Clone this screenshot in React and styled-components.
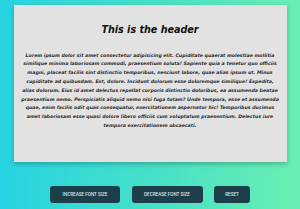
import React from "react";
import styled, { createGlobalStyle } from "styled-components";

const Global = createGlobalStyle`
  html, body { margin: 0; padding: 0; }
  body {
    width: 300px;
    height: 209px;
    overflow: hidden;
    background: linear-gradient(to right, #27d3e2 0%, #45e0c8 50%, #6aefb2 100%);
  }
`;

const Page = styled.div`
  width: 300px;
  height: 209px;
  display: flex;
  flex-direction: column;
  align-items: center;
  padding-top: 5px;
  box-sizing: border-box;
`;

const Card = styled.div`
  width: 273px;
  height: 157px;
  background: #e2e2e2;
  box-shadow: 0 2px 5px rgba(0, 0, 0, 0.25);
  box-sizing: border-box;
  padding: 0 6px;
  display: flex;
  flex-direction: column;
  align-items: center;
`;

const Title = styled.h1`
  margin: 18px 0 0;
  font-family: "DejaVu Sans", Verdana, sans-serif;
  font-weight: bold;
  font-style: italic;
  font-size: 9.6px;
  line-height: 14px;
  color: #111;
  text-align: center;
`;

const Text = styled.p`
  margin: 14.6px 0 0;
  font-family: "DejaVu Sans", Verdana, sans-serif;
  font-weight: bold;
  font-style: italic;
  font-size: 4.7px;
  line-height: 8.8px;
  color: #2a2a2a;
  text-align: center;
`;

const Buttons = styled.div`
  display: flex;
  gap: 11.5px;
  margin-top: 24px;
`;

const Button = styled.button`
  height: 17px;
  width: ${(p) => p.$w}px;
  border: none;
  border-radius: 3px;
  background: #1d3f4c;
  color: #d6e2e6;
  font-family: Roboto, "Liberation Sans", sans-serif;
  font-weight: 500;
  font-size: 4.6px;
  text-transform: uppercase;
  padding: 0;
  cursor: pointer;
`;

export default function App() {
  return (
    <>
      <Global />
      <Page>
        <Card>
          <Title>This is the header</Title>
          <Text>
            Lorem ipsum dolor sit amet consectetur adipisicing elit. Cupiditate
            quaerat molestiae mollitia similique minima laboriosam commodi,
            praesentium soluta! Sapiente quia a tenetur quo officiis magni,
            placeat facilis sint distinctio temporibus, nesciunt labore, quae
            alias ipsum ut. Minus cupiditate ad quibusdam. Est, dolore. Incidunt
            dolorum esse doloremque similique! Expedita, alias dolorum. Eius id
            amet delectus repellat corporis distinctio doloribus, ea assumenda
            beatae praesentium nemo. Perspiciatis aliquid nemo nisi fuga totam?
            Unde tempora, esse et assumenda quae, enim facilis odit quas
            consequatur, exercitationem aspernatur hic! Temporibus ducimus amet
            laboriosam esse quasi dolore libero officiis cum voluptatum
            praesentium. Delectus iure tempora exercitationem obcaecati.
          </Text>
        </Card>
        <Buttons>
          <Button $w={70}>Increase font size</Button>
          <Button $w={71}>Decrease font size</Button>
          <Button $w={36}>Reset</Button>
        </Buttons>
      </Page>
    </>
  );
}
